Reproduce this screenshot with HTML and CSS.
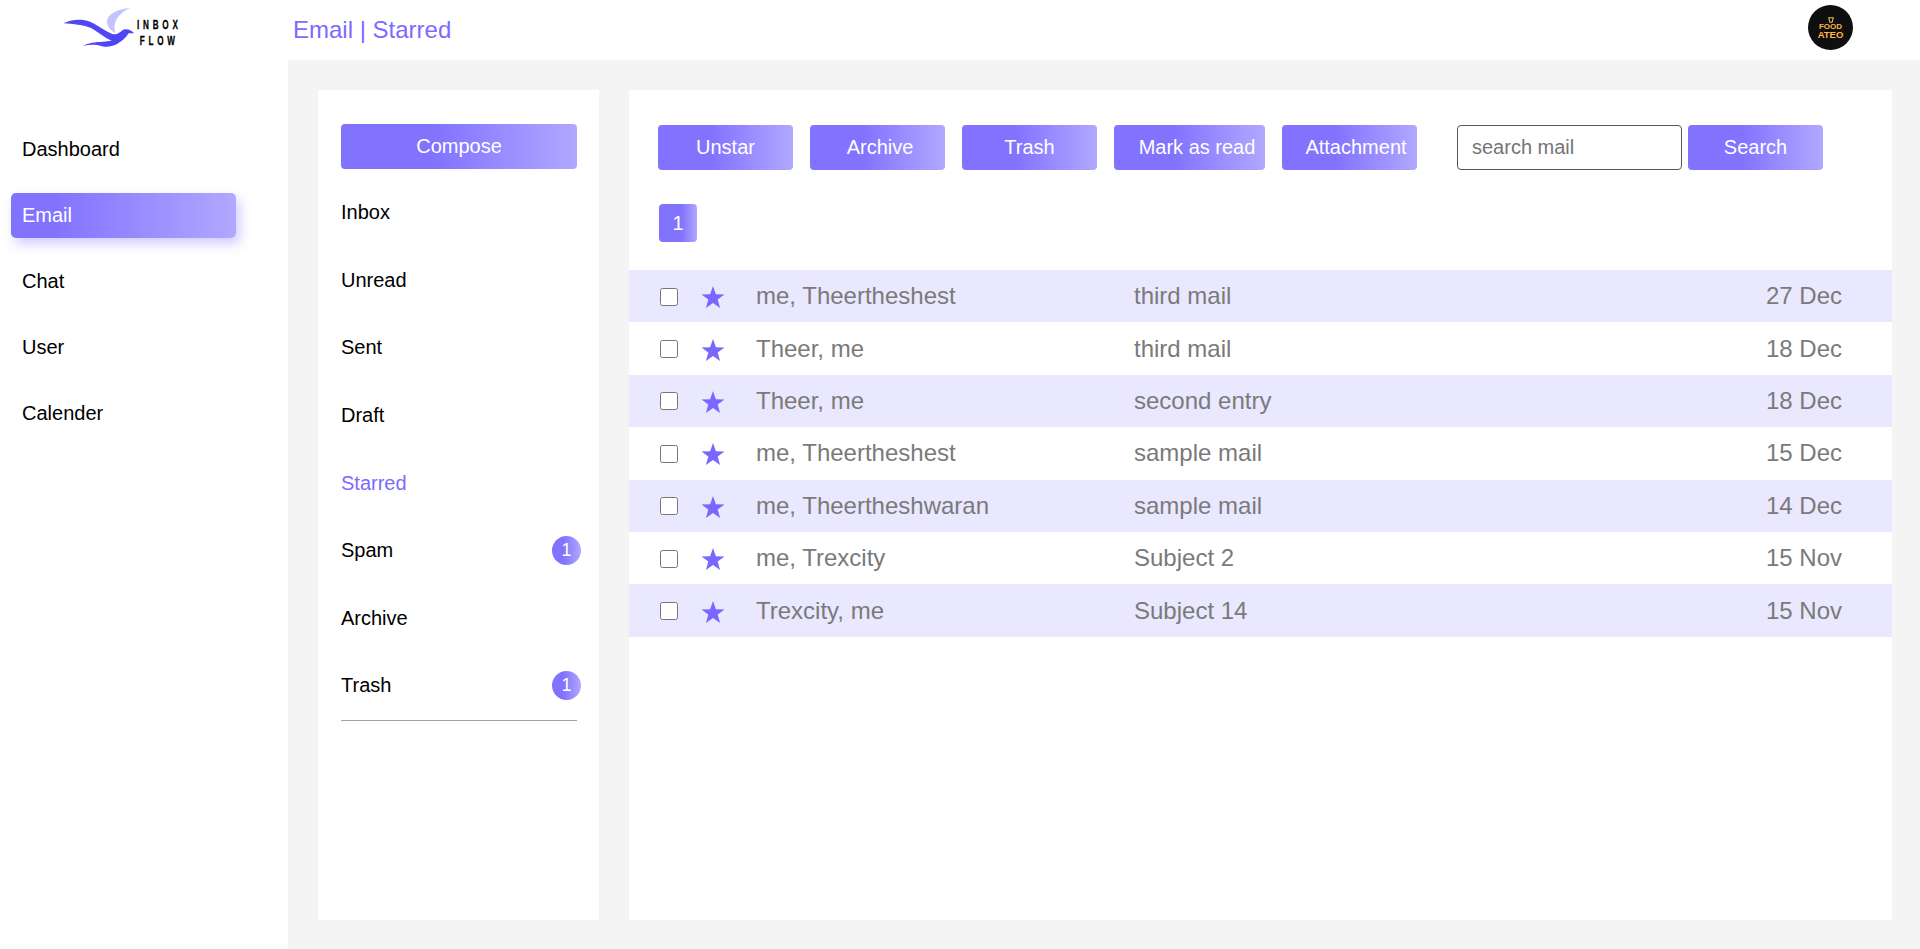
FILE: index.html
```html
<!DOCTYPE html>
<html lang="en">
<head>
  <meta charset="UTF-8">
  <title>Inbox Flow</title>
  <link rel="stylesheet" href="styles.css">
</head>
<body>
  <aside class="sidebar">
    <div class="logo">
      <svg class="logo-bird" viewBox="60 6 76 42" width="76" height="42">
        <path fill="#c5c3fb" d="M130 8C118 9 107 14 107 22C107 27 111 31 116 33C112 26 116 14 130 8Z"/>
        <path fill="#4f46f5" d="M63.3 23.3C70 20 80 18 90 21.7C100 26 108 34 115 34.3C120 34 122 29.5 125 29.3C129 29 132 31 134.3 33.3L128.5 33.3C126 38 122 41 116.7 44.3C112 46.5 108 46.7 106.7 46.7C102 46.7 98 45 96.7 45C92 44.5 88 45 83.3 45.7C88 43 95 42 103 41.7L111.7 40.7C105 38 98 32 91 28C84 25 73 24 63.3 23.3Z"/>
      </svg>
      <div class="logo-text">
        <span>INBOX</span>
        <span>FLOW</span>
      </div>
    </div>
    <nav class="side-nav">
      <a class="side-link">Dashboard</a>
      <a class="side-link active">Email</a>
      <a class="side-link">Chat</a>
      <a class="side-link">User</a>
      <a class="side-link">Calender</a>
    </nav>
  </aside>

  <div class="page">
    <header class="topbar">
      <h1 class="page-title">Email | Starred</h1>
      <div class="avatar">
        <svg class="avatar-mark" viewBox="0 0 8 8" width="6" height="6"><path fill="none" stroke="#e8c24a" stroke-width="1.4" d="M1 1H7L5.5 7H2.5Z"/></svg>
        <span class="avatar-small">FOOD</span>
        <span>ATEO</span>
      </div>
    </header>

    <main class="content">
      <section class="folders">
        <button class="btn compose">Compose</button>
        <ul class="folder-list">
          <li>Inbox</li>
          <li>Unread</li>
          <li>Sent</li>
          <li>Draft</li>
          <li class="current">Starred</li>
          <li>Spam <span class="badge">1</span></li>
          <li>Archive</li>
          <li>Trash <span class="badge">1</span></li>
        </ul>
      </section>

      <section class="mails">
        <div class="toolbar">
          <button class="btn">Unstar</button>
          <button class="btn btn-archive">Archive</button>
          <button class="btn">Trash</button>
          <button class="btn btn-mark">Mark as read</button>
          <button class="btn btn-attach">Attachment</button>
          <form class="search">
            <input type="text" placeholder="search mail">
            <button type="button" class="btn">Search</button>
          </form>
        </div>
        <div class="pager"><span class="page-num">1</span></div>

        <div class="mail-list">
          <div class="mail-row">
            <input type="checkbox">
            <svg class="star" viewBox="0 0 24 23"><polygon points="12,0 15,8.5 24,8.8 16.9,14.2 19.4,23 12,17.8 4.6,23 7.1,14.2 0,8.8 9,8.5"/></svg>
            <span>me, Theertheshest</span>
            <span>third mail</span>
            <span class="mail-date">27 Dec</span>
          </div>
          <div class="mail-row">
            <input type="checkbox">
            <svg class="star" viewBox="0 0 24 23"><polygon points="12,0 15,8.5 24,8.8 16.9,14.2 19.4,23 12,17.8 4.6,23 7.1,14.2 0,8.8 9,8.5"/></svg>
            <span>Theer, me</span>
            <span>third mail</span>
            <span class="mail-date">18 Dec</span>
          </div>
          <div class="mail-row">
            <input type="checkbox">
            <svg class="star" viewBox="0 0 24 23"><polygon points="12,0 15,8.5 24,8.8 16.9,14.2 19.4,23 12,17.8 4.6,23 7.1,14.2 0,8.8 9,8.5"/></svg>
            <span>Theer, me</span>
            <span>second entry</span>
            <span class="mail-date">18 Dec</span>
          </div>
          <div class="mail-row">
            <input type="checkbox">
            <svg class="star" viewBox="0 0 24 23"><polygon points="12,0 15,8.5 24,8.8 16.9,14.2 19.4,23 12,17.8 4.6,23 7.1,14.2 0,8.8 9,8.5"/></svg>
            <span>me, Theertheshest</span>
            <span>sample mail</span>
            <span class="mail-date">15 Dec</span>
          </div>
          <div class="mail-row">
            <input type="checkbox">
            <svg class="star" viewBox="0 0 24 23"><polygon points="12,0 15,8.5 24,8.8 16.9,14.2 19.4,23 12,17.8 4.6,23 7.1,14.2 0,8.8 9,8.5"/></svg>
            <span>me, Theertheshwaran</span>
            <span>sample mail</span>
            <span class="mail-date">14 Dec</span>
          </div>
          <div class="mail-row">
            <input type="checkbox">
            <svg class="star" viewBox="0 0 24 23"><polygon points="12,0 15,8.5 24,8.8 16.9,14.2 19.4,23 12,17.8 4.6,23 7.1,14.2 0,8.8 9,8.5"/></svg>
            <span>me, Trexcity</span>
            <span>Subject 2</span>
            <span class="mail-date">15 Nov</span>
          </div>
          <div class="mail-row">
            <input type="checkbox">
            <svg class="star" viewBox="0 0 24 23"><polygon points="12,0 15,8.5 24,8.8 16.9,14.2 19.4,23 12,17.8 4.6,23 7.1,14.2 0,8.8 9,8.5"/></svg>
            <span>Trexcity, me</span>
            <span>Subject 14</span>
            <span class="mail-date">15 Nov</span>
          </div>
        </div>
      </section>
    </main>
  </div>
</body>
</html>
```

FILE: styles.css
```css
* {
  box-sizing: border-box;
}
html, body {
  height: 100%;
}
body {
  display: flex;
  margin: 0;
  font-family: "Liberation Sans", Arial, sans-serif;
  font-size: 20px;
  color: #000;
  background: #fff;
  overflow: hidden;
}

/* sidebar */
.sidebar {
  width: 288px;
  flex-shrink: 0;
  background: #fff;
}
.logo {
  display: flex;
  align-items: center;
  height: 60px;
  padding: 0 0 7px 60px;
}
.logo-bird {
  display: block;
  flex-shrink: 0;
}
.logo-text {
  display: flex;
  flex-direction: column;
  margin: 12px 0 0 1px;
  font-size: 12.5px;
  font-weight: bold;
  line-height: 16px;
  letter-spacing: 5.8px;
  text-align: center;
  -webkit-text-stroke: 0.3px #000;
  transform: scaleX(0.65);
  transform-origin: left center;
}
.side-nav {
  display: flex;
  flex-direction: column;
  gap: 21px;
  padding: 67px 52px 0 11px;
}
.side-link {
  display: flex;
  align-items: center;
  height: 45px;
  padding-left: 11px;
  border-radius: 5px;
}
.side-link.active {
  color: #fff;
  background: linear-gradient(90deg, #8273ff 20%, #b1a8ff);
  box-shadow: 4px 6px 12px rgba(125, 110, 255, 0.35);
}

/* top bar */
.page {
  flex: 1;
  display: flex;
  flex-direction: column;
  min-width: 0;
}
.topbar {
  display: flex;
  align-items: center;
  justify-content: space-between;
  height: 60px;
  padding: 0 67px 0 5px;
  background: #fff;
}
.page-title {
  margin: 0;
  font-size: 24px;
  font-weight: normal;
  color: #7c6bff;
}
.avatar {
  display: flex;
  flex-direction: column;
  align-items: center;
  justify-content: center;
  width: 45px;
  height: 45px;
  margin-bottom: 5px;
  border-radius: 50%;
  background: #0f0f0f;
  color: #ffb648;
  font-size: 9.5px;
  font-weight: bold;
  line-height: 8px;
}
.avatar-mark {
  display: block;
}
.avatar-small {
  font-size: 8px;
}

/* panels */
.content {
  flex: 1;
  display: flex;
  gap: 30px;
  padding: 30px 28px 29px 30px;
  background: #f4f4f4;
}
.folders {
  width: 281px;
  flex-shrink: 0;
  padding: 34px 22px 0 23px;
  background: #fff;
}
.mails {
  flex: 1;
  padding-top: 35px;
  background: #fff;
}

/* buttons */
.btn {
  display: block;
  width: 135px;
  height: 45px;
  padding: 0;
  border: none;
  border-radius: 4px;
  color: #fff;
  font: inherit;
  background: linear-gradient(90deg, #8273ff 40%, #b1a8ff);
}
.compose {
  width: 100%;
}
.btn-archive {
  padding-left: 5px;
}
.btn-mark {
  width: 151px;
  padding-left: 15px;
}
.btn-attach {
  padding-left: 13px;
}

/* folder list */
.folder-list {
  margin: 0;
  padding: 10px 0 0;
  list-style: none;
  border-bottom: 1px solid #a3a3a3;
}
.folder-list li {
  display: flex;
  align-items: center;
  justify-content: space-between;
  height: 67.6px;
}
.folder-list .current {
  color: #7c6bff;
}
.badge {
  display: flex;
  align-items: center;
  justify-content: center;
  width: 29px;
  height: 29px;
  margin-right: -4px;
  border-radius: 50%;
  color: #fff;
  font-size: 18px;
  background: linear-gradient(90deg, #8273ff 40%, #b1a8ff);
}

/* mail toolbar */
.toolbar {
  display: flex;
  gap: 17px;
  padding-left: 29px;
}
.search {
  display: flex;
  gap: 6px;
  margin-left: 23px;
}
.search input {
  width: 225px;
  height: 45px;
  padding: 0 14px;
  border: 1px solid #555;
  border-radius: 4px;
  font: inherit;
}
.search input::placeholder {
  color: #757575;
}
.pager {
  padding: 34px 0 28px 30px;
}
.page-num {
  display: flex;
  align-items: center;
  justify-content: center;
  width: 38px;
  height: 38px;
  border-radius: 4px;
  color: #fff;
  background: linear-gradient(90deg, #8273ff 60%, #b1a8ff);
}

/* mail rows */
.mail-row {
  display: grid;
  grid-template-columns: 18px 54px 402px 1fr auto;
  align-items: center;
  height: 52.4px;
  padding: 0 50px 0 31px;
  font-size: 24px;
  color: #7a7a7a;
}
.mail-row:nth-child(odd) {
  background: #eae8ff;
}
.mail-row input {
  width: 18px;
  height: 18px;
  margin: 1px 0 0;
}
.star {
  width: 24px;
  height: 22px;
  margin-left: 23px;
  margin-top: 2px;
  fill: #7a67ff;
  overflow: visible;
}
.mail-row span:first-of-type {
  margin-left: 24px;
}
.mail-date {
  text-align: right;
}
```
